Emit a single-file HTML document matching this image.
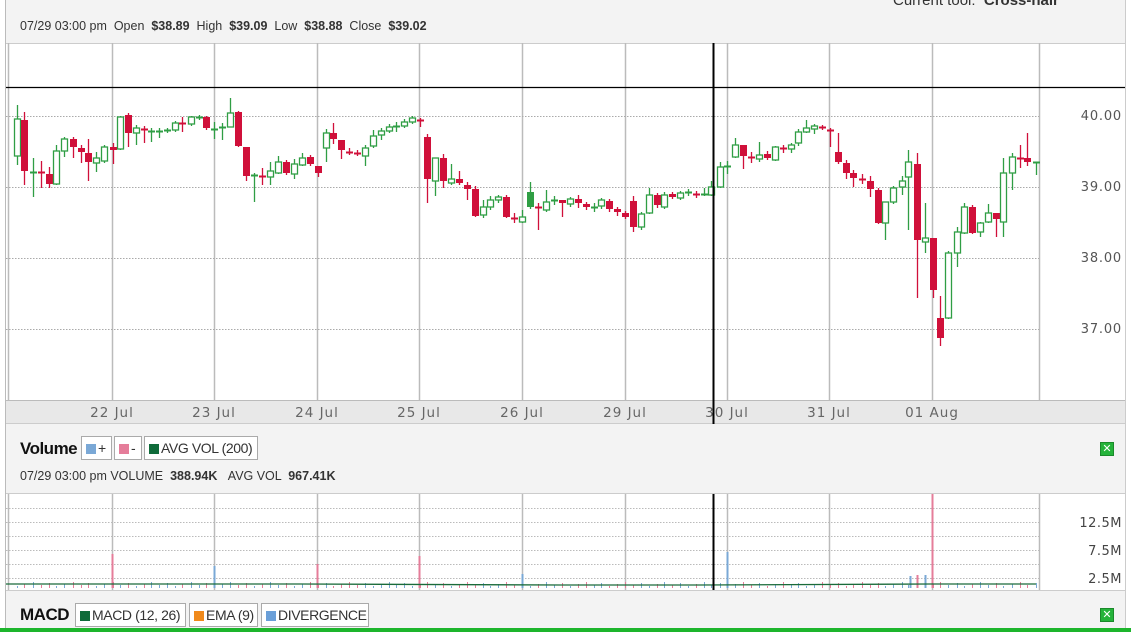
<!DOCTYPE html>
<html><head><meta charset="utf-8"><style>
*{margin:0;padding:0;box-sizing:border-box}
body{width:1131px;height:632px;overflow:hidden;background:#fff;font-family:"Liberation Sans",Arial,sans-serif;position:relative}
#panel{position:absolute;left:5px;top:0;width:1121px;height:632px;background:#f3f3f3;border-left:1px solid #bbb;border-right:1px solid #ccc}
.t{position:absolute;white-space:nowrap;color:#333}
.box{position:absolute;height:24px;border:1px solid #aaa;background:#fff;font-size:14px;color:#333;line-height:22px;padding-left:4px;white-space:nowrap;overflow:hidden;letter-spacing:-0.4px}
.sq{display:inline-block;width:10px;height:10px;vertical-align:-1px;margin-right:2px}
.x{position:absolute;width:14px;height:14px;background:#25b33a;border:1px solid #1a8a2a;color:#fff;font:bold 11px/12px "DejaVu Sans",sans-serif;text-align:center}
svg{position:absolute;left:0;top:0}
</style></head><body>
<div id="panel"></div>
<div class="t" style="left:893px;top:-8px;font-size:15px;color:#333">Current tool: &nbsp;<b>Cross-hair</b></div>
<div class="t" style="left:20px;top:19px;font-size:12.5px">07/29 03:00 pm &nbsp;Open &nbsp;<b>$38.89</b> &nbsp;High &nbsp;<b>$39.09</b> &nbsp;Low &nbsp;<b>$38.88</b> &nbsp;Close &nbsp;<b>$39.02</b></div>
<svg width="1131" height="632" id="s"></svg>
<div class="t" style="left:20px;top:439px;font-size:17px;font-weight:bold;color:#111;letter-spacing:-0.5px">Volume</div>
<div class="box" style="left:81px;top:436px;width:31px"><span class="sq" style="background:#7aa8d6"></span>+</div>
<div class="box" style="left:114px;top:436px;width:28px"><span class="sq" style="background:#e57d9a"></span>-</div>
<div class="box" style="left:144px;top:436px;width:114px"><span class="sq" style="background:#0f6b3a"></span>AVG VOL (200)</div>
<div class="t" style="left:20px;top:469px;font-size:12.5px">07/29 03:00 pm VOLUME &nbsp;<b>388.94K</b> &nbsp;&nbsp;AVG VOL &nbsp;<b>967.41K</b></div>
<div class="x" style="left:1100px;top:442px">✕</div>
<div class="t" style="left:20px;top:605px;font-size:17px;font-weight:bold;color:#111;letter-spacing:-0.5px">MACD</div>
<div class="box" style="left:75px;top:603px;width:111px"><span class="sq" style="background:#0f6b3a"></span>MACD (12, 26)</div>
<div class="box" style="left:189px;top:603px;width:69px"><span class="sq" style="background:#f08a1c"></span>EMA (9)</div>
<div class="box" style="left:261px;top:603px;width:108px"><span class="sq" style="background:#6a9fd8"></span>DIVERGENCE</div>
<div class="x" style="left:1100px;top:608px">✕</div>
<div style="position:absolute;left:0;top:628px;width:1131px;height:4px;background:#1db52c"></div>
<script>
var C=[[17,119,156,105,165,1],[24,120,171,112,185,0],[33,172,172,158,197,1],[41,172,172,161,188,0],[49,174,184,167,188,0],[56,151,184,145,185,1],[64,139,151,137,157,1],[73,139,147,137,158,0],[81,148,152,145,163,0],[88,153,162,139,181,0],[96,158,163,152,172,1],[104,147,161,145,163,1],[113,147,150,143,164,0],[120,117,149,116,150,1],[128,115,133,113,147,0],[136,128,133,125,145,1],[144,129,129,126,143,0],[151,131,131,128,142,1],[159,131,131,128,138,1],[167,130,130,128,133,1],[175,123,130,121,132,1],[182,123,123,117,132,0],[191,117,124,116,126,1],[199,117,117,115,120,1],[206,117,128,116,130,0],[214,129,129,122,139,1],[222,127,127,123,140,1],[230,113,127,98,127,1],[238,112,146,111,147,0],[246,147,176,147,181,0],[254,175,175,173,202,1],[262,176,176,168,185,0],[270,171,177,162,185,1],[278,162,173,156,174,1],[286,162,173,160,175,0],[294,164,174,159,179,1],[302,158,165,153,166,1],[310,157,164,155,166,0],[318,166,173,166,177,0],[326,133,148,129,162,1],[333,133,139,123,144,0],[341,140,150,140,159,0],[349,152,152,148,155,0],[357,153,153,150,156,0],[365,148,156,145,166,1],[373,136,146,130,148,1],[381,131,135,128,140,1],[389,127,131,124,133,1],[396,126,126,122,132,1],[404,122,126,119,128,1],[412,118,122,116,124,1],[420,120,120,118,127,0],[427,137,179,134,203,0],[435,158,181,158,196,1],[443,158,181,154,188,0],[451,179,183,164,185,1],[459,179,183,171,185,0],[467,185,189,182,200,0],[475,189,216,186,217,0],[483,207,215,200,218,1],[490,200,207,196,210,1],[498,197,200,195,203,1],[506,197,217,195,218,0],[514,218,218,213,223,0],[522,217,222,210,223,1],[530,192,207,182,209,2],[538,207,207,203,230,0],[546,202,210,190,212,1],[554,200,200,196,205,1],[562,200,203,200,217,0],[570,199,204,197,207,1],[578,199,203,195,208,0],[586,204,207,202,210,0],[594,207,207,203,212,1],[601,200,206,198,209,1],[609,201,209,199,212,0],[617,209,212,207,216,0],[625,213,217,211,219,0],[633,201,227,196,232,0],[641,214,227,212,230,1],[649,195,213,188,214,1],[657,195,205,193,208,0],[664,195,207,192,209,1],[672,194,197,192,199,0],[680,193,198,191,200,1],[688,192,192,189,196,1],[696,194,194,191,198,0],[704,194,194,188,196,1],[711,187,195,181,196,1],[720,167,187,162,188,1],[727,166,166,161,174,1],[735,145,157,138,158,1],[743,145,156,145,169,0],[751,157,157,152,163,0],[759,155,159,142,162,1],[767,154,158,151,160,0],[775,147,160,146,161,1],[783,148,148,145,153,0],[791,145,149,143,153,1],[798,132,143,129,146,1],[806,128,132,120,133,1],[814,126,129,124,134,1],[822,127,127,125,130,0],[830,130,130,128,147,0],[838,152,162,133,164,0],[846,163,173,160,179,0],[853,173,178,170,187,0],[862,179,179,174,184,0],[870,181,189,176,197,0],[878,190,223,188,224,0],[885,202,223,202,240,1],[893,188,202,186,204,1],[902,181,187,176,195,1],[908,162,177,150,230,1],[917,164,240,153,298,0],[925,238,242,203,253,1],[933,238,290,238,298,0],[940,318,338,296,346,0],[948,253,318,251,319,1],[957,232,253,227,267,1],[964,207,233,203,234,1],[972,207,233,205,234,0],[980,223,232,222,237,1],[988,213,222,204,223,1],[996,213,219,213,237,0],[1003,173,222,158,237,1],[1012,157,173,153,190,1],[1020,158,158,145,168,0],[1027,158,162,133,166,0],[1036,162,163,162,175,1]];
var h='';
function R(x,y,w,hh,f){h+='<rect x="'+x+'" y="'+y+'" width="'+w+'" height="'+hh+'" fill="'+f+'"/>'}
function L(x1,y1,x2,y2,s,w,d){h+='<line x1="'+x1+'" y1="'+y1+'" x2="'+x2+'" y2="'+y2+'" stroke="'+s+'" stroke-width="'+(w||1)+'"'+(d?' stroke-dasharray="'+d+'"':'')+'/>'}
function T(x,y,t,a,sz,c,ls){h+='<text x="'+x+'" y="'+y+'" font-family="DejaVu Sans,sans-serif" font-size="'+sz+'" fill="'+c+'" text-anchor="'+a+'"'+(ls?' letter-spacing="'+ls+'"':'')+'>'+t+'</text>'}
R(6,43,1119,357,'#fff');R(6,43,1119,1,'#ccc');
R(6,400,1119,24,'#e8e8e8');L(6,400.5,1125,400.5,'#bbb');L(6,423.5,1125,423.5,'#ccc');
R(6,494,1119,96,'#fff');L(6,493.5,1125,493.5,'#ccc');L(6,590.5,1125,590.5,'#ccc');
var G=[8,112,214,317,419,522,625,727,829,932,1039];
G.forEach(function(x){L(x+.5,43,x+.5,400,'#bbb',1.5);L(x+.5,494,x+.5,590,'#bbb',1.5)});
[116,187,258,329].forEach(function(y){L(6,y+.5,1039,y+.5,'#aaa',1,'1.5,1.5')});
[508,522,536,550,564,578].forEach(function(y){L(6,y+.5,1039,y+.5,'#bbb',1,'1.5,1.5')});
T(1122,120,'40.00','end',13,'#555',0.8);T(1122,191,'39.00','end',13,'#555',0.8);T(1122,262,'38.00','end',13,'#555',0.8);T(1122,333,'37.00','end',13,'#555',0.8);
T(1122,527,'12.5M','end',13,'#444',0.5);T(1122,555,'7.5M','end',13,'#444',0.5);T(1122,583,'2.5M','end',13,'#444',0.5);
var D=['22 Jul','23 Jul','24 Jul','25 Jul','26 Jul','29 Jul','30 Jul','31 Jul','01 Aug'];
D.forEach(function(d,i){T(G[i+1],417,d,'middle',13.5,'#666',1)});
var GR='#2f9e44',RD='#d0103a';
var spikes={112:[554,0],214:[566,1],317:[564,0],419:[556,0],522:[574,1],727:[552,1],932:[494,0],910:[576,1],917:[575,0],925:[575,1]};
C.forEach(function(c,i){var x=c[0],col=c[5]?GR:RD;
 L(x+.5,c[3],x+.5,c[4],col,1.3);
 var t=Math.min(c[1],c[2]),b=Math.max(c[1],c[2]);
 if(b-t<2){L(x-3,t+.5,x+4,t+.5,col,2)}
 else if(c[5]==1){h+='<rect x="'+(x-2.5)+'" y="'+t+'" width="6" height="'+(b-t)+'" fill="#fff" stroke="'+col+'" stroke-width="1.3"/>'}
 else{R(x-3,t,7,b-t,c[5]==2?GR:RD)}
 var vc=c[5]?'#7aa8d6':'#e57d9a',vh=2+(i*7%5);
 L(x+.5,588-vh,x+.5,588,vc,1);
});
for(var k in spikes){var s=spikes[k];L(+k+.5,s[0],+k+.5,588,s[1]?'#7aa8d6':'#e57d9a',2)}
h+='<polyline points="6,584 300,584 560,585 700,585 930,584 1000,584 1036,584" fill="none" stroke="#1a6b3a" stroke-width="1.3"/>';
L(6,87.5,1125,87.5,'#000',1.3);
L(713.5,43,713.5,424,'#000',2);L(713.5,494,713.5,590,'#000',2);
document.getElementById('s').innerHTML=h;
</script>
</body></html>
